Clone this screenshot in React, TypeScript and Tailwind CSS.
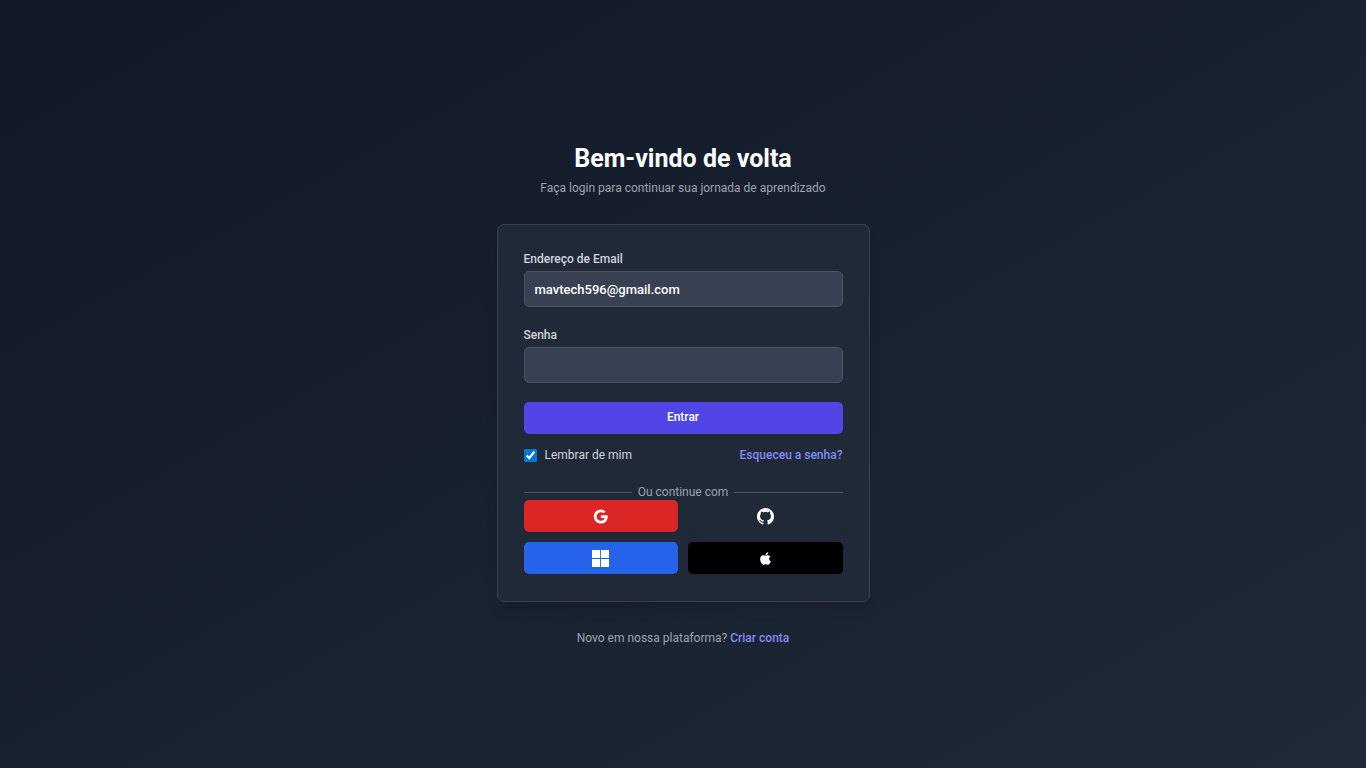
import type { ReactNode } from "react";

function Icon({ children }: { children: ReactNode }) {
  return (
    <svg className="size-[17px]" viewBox="0 0 24 24" fill="currentColor" aria-hidden="true">
      {children}
    </svg>
  );
}

function SocialButton({ label, color, children }: { label: string; color: string; children: ReactNode }) {
  return (
    <button
      type="button"
      aria-label={label}
      className={`flex h-8 items-center justify-center rounded-[5px] text-white shadow-xs ${color}`}
    >
      <Icon>{children}</Icon>
    </button>
  );
}

const labelClass = "block text-xs leading-4 font-medium text-gray-300";
const inputClass =
  "mt-1 block h-9 w-full rounded-[5px] border border-gray-600 bg-[#374151] px-2.5 text-[13px] font-medium text-white shadow-xs outline-none focus:border-indigo-500";

export default function App() {
  return (
    <main className="flex min-h-screen flex-col items-center justify-center bg-linear-to-br/srgb from-[#111827] to-[#1f2937] px-4 font-['Roboto',sans-serif] text-xs leading-4">
      <div className="w-full max-w-[373px] pt-[21px]">
        <header className="text-center">
          <h1 className="text-[25px] leading-8 font-bold text-white">Bem-vindo de volta</h1>
          <p className="mt-[5px] text-[#9ca3af]">Faça login para continuar sua jornada de aprendizado</p>
        </header>

        <section className="mt-7 rounded-[7px] border border-[#374151] bg-[#1f2937] px-[26px] pt-[26px] pb-[27px] shadow-lg">
          <form onSubmit={(e) => e.preventDefault()}>
            <label htmlFor="email" className={labelClass}>Endereço de Email</label>
            <input id="email" type="email" defaultValue="mavtech596@gmail.com" className={inputClass} />

            <label htmlFor="senha" className={`mt-5 ${labelClass}`}>Senha</label>
            <input id="senha" type="password" className={inputClass} />

            <button
              type="submit"
              className="mt-[19px] flex h-8 w-full items-center justify-center rounded-[5px] bg-[#4f46e5] pb-0.5 font-medium text-white shadow-xs"
            >
              Entrar
            </button>

            <div className="mt-[13px] flex items-center justify-between">
              <label className="flex items-center gap-2 text-gray-300">
                <input type="checkbox" defaultChecked className="size-[13px] accent-[#0078d7]" />
                Lembrar de mim
              </label>
              <a href="#senha" className="font-medium text-[#818cf8]">Esqueceu a senha?</a>
            </div>
          </form>

          <div className="mt-[21px] flex items-center gap-1.5 text-[#9ca3af]">
            <span className="h-px flex-1 bg-[#4b5563]" />
            <span>Ou continue com</span>
            <span className="h-px flex-1 bg-[#4b5563]" />
          </div>

          <div className="grid grid-cols-2 gap-2.5">
            <SocialButton label="Google" color="bg-[#dc2626]">
              <path d="M12.545 10.239v3.821h5.445c-.712 2.315-2.647 3.972-5.445 3.972a6.033 6.033 0 1 1 0-12.064c1.498 0 2.866.549 3.921 1.453l2.814-2.814A9.969 9.969 0 0 0 12.545 2C7.021 2 2.543 6.477 2.543 12s4.478 10 10.002 10c8.396 0 10.249-7.85 9.426-11.748l-9.426-.013z" />
            </SocialButton>
            <SocialButton label="GitHub" color="bg-[#1f2937]">
              <path d="M12 0c-6.626 0-12 5.373-12 12 0 5.302 3.438 9.8 8.207 11.387.599.111.793-.261.793-.577v-2.234c-3.338.726-4.033-1.416-4.033-1.416-.546-1.387-1.333-1.756-1.333-1.756-1.089-.745.083-.729.083-.729 1.205.084 1.839 1.237 1.839 1.237 1.07 1.834 2.807 1.304 3.492.997.107-.775.418-1.305.762-1.604-2.665-.305-5.467-1.334-5.467-5.931 0-1.311.469-2.381 1.236-3.221-.124-.303-.535-1.524.117-3.176 0 0 1.008-.322 3.301 1.23.957-.266 1.983-.399 3.003-.404 1.02.005 2.047.138 3.006.404 2.291-1.552 3.297-1.23 3.297-1.23.653 1.653.242 2.874.118 3.176.77.84 1.235 1.911 1.235 3.221 0 4.609-2.807 5.624-5.479 5.921.43.372.823 1.102.823 2.222v3.293c0 .319.192.694.801.576 4.765-1.589 8.199-6.086 8.199-11.386 0-6.627-5.373-12-12-12z" />
            </SocialButton>
            <SocialButton label="Microsoft" color="bg-[#2563eb]">
              <path d="M0 0h11.377v11.372H0zM12.623 0H24v11.372H12.623zM0 12.623h11.377V24H0zM12.623 12.623H24V24H12.623z" />
            </SocialButton>
            <SocialButton label="Apple" color="bg-black">
              <path d="M17.05 20.28c-.98.95-2.05.8-3.08.35-1.09-.46-2.09-.48-3.24 0-1.44.62-2.2.44-3.06-.35C2.79 15.25 3.51 7.59 9.05 7.31c1.35.07 2.29.74 3.08.8 1.18-.24 2.31-.93 3.57-.84 1.51.12 2.65.72 3.4 1.8-3.12 1.87-2.38 5.98.48 7.13-.57 1.5-1.31 2.99-2.54 4.09zM12.03 7.25c-.15-2.23 1.66-4.07 3.74-4.25.29 2.58-2.34 4.5-3.74 4.25z" />
            </SocialButton>
          </div>
        </section>

        <p className="mt-7 text-center text-[#9ca3af]">
          Novo em nossa plataforma?{" "}
          <a href="#criar-conta" className="font-medium text-[#818cf8]">Criar conta</a>
        </p>
      </div>
    </main>
  );
}
